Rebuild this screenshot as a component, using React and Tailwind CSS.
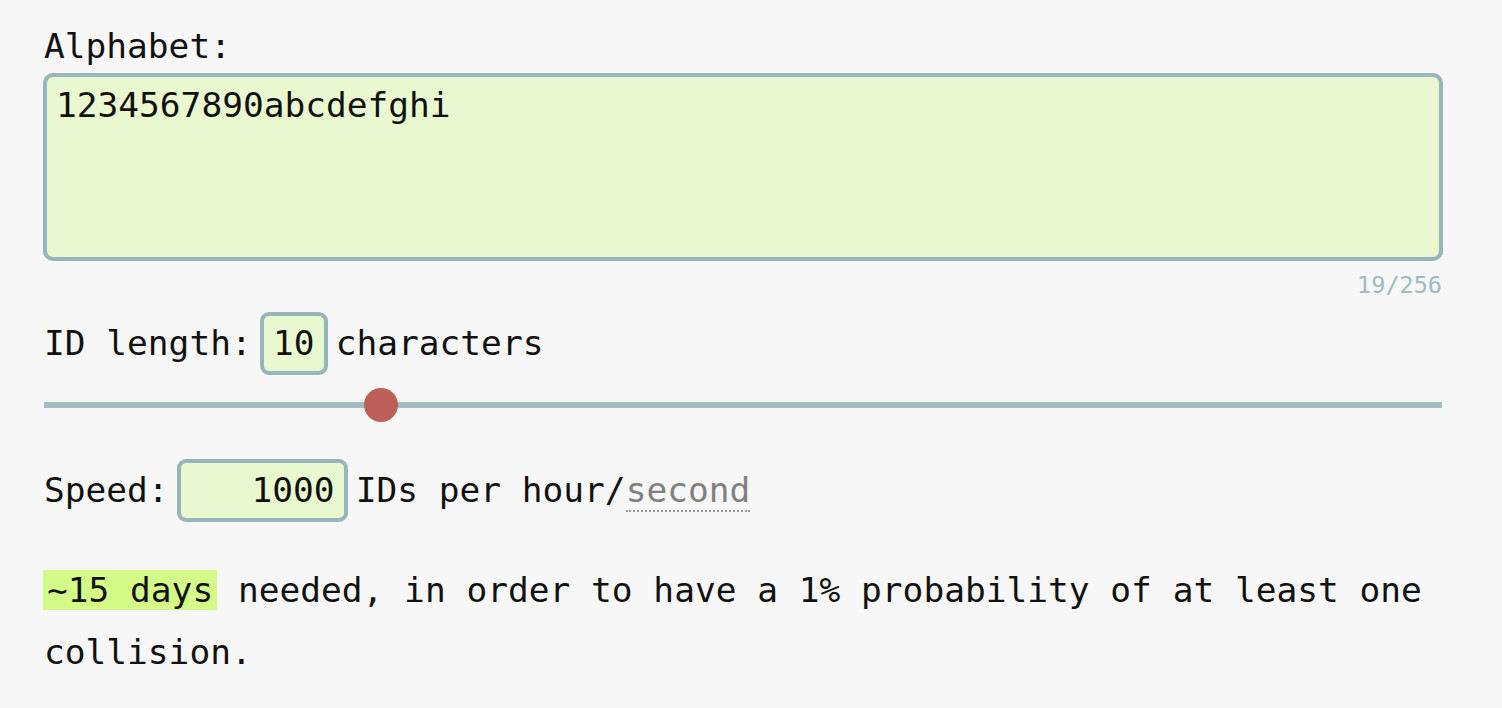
import React from "react";

export default function App() {
  return (
    <div
      className="w-[1502px] h-[708px] overflow-hidden bg-[#f7f7f7] text-[#111] pl-[44px] pr-[60px] pt-[24px]"
      style={{ fontFamily: '"DejaVu Sans Mono", "Liberation Mono", monospace' }}
    >
      <div className="text-[34.5px] leading-[45px] mb-[4px]">Alphabet:</div>
      <textarea
        readOnly
        value="1234567890abcdefghi"
        className="block -ml-px w-[1400px] h-[188px] resize-none outline-none border-[4px] border-[#99b5bc] rounded-[10px] bg-[#eaf8cf] px-[9px] pt-[6px] text-[34.5px] leading-[45px] text-[#111]"
        style={{ fontFamily: '"DejaVu Sans Mono", "Liberation Mono", monospace' }}
      />
      <div className="mt-[9px] text-right text-[23.5px] leading-[30px] text-[#9fbac0]">19/256</div>

      <div className="mt-[12px] flex items-center text-[34.5px] leading-[45px]">
        <span>ID length:</span>
        <div className="mx-[8px] h-[63px] w-[68px] flex items-center justify-center border-[4px] border-[#99b5bc] rounded-[9px] bg-[#eaf8cf]">
          10
        </div>
        <span>characters</span>
      </div>

      <div className="relative mt-[13px] h-[34px] flex items-center">
        <div className="w-full h-[6px] bg-[#a3bcc2]" />
        <div className="absolute left-[320px] top-0 w-[34px] h-[34px] rounded-full bg-[#bc5f58]" />
      </div>

      <div className="mt-[37px] flex items-center text-[34.5px] leading-[45px]">
        <span>Speed:</span>
        <div className="mx-[8px] h-[63px] w-[171px] flex items-center justify-end pr-[9px] border-[4px] border-[#99b5bc] rounded-[9px] bg-[#eaf8cf]">
          1000
        </div>
        <span>
          IDs per hour/
          <span className="text-[#808080] border-b-2 border-dotted border-[#9a9a9a]">second</span>
        </span>
      </div>

      <p className="mt-[37px] text-[34.5px] leading-[62px]">
        <span className="bg-[#d4fb87] px-[4px] -ml-px">~15 days</span> needed, in order to have a 1% probability of at least one collision.
      </p>
    </div>
  );
}
